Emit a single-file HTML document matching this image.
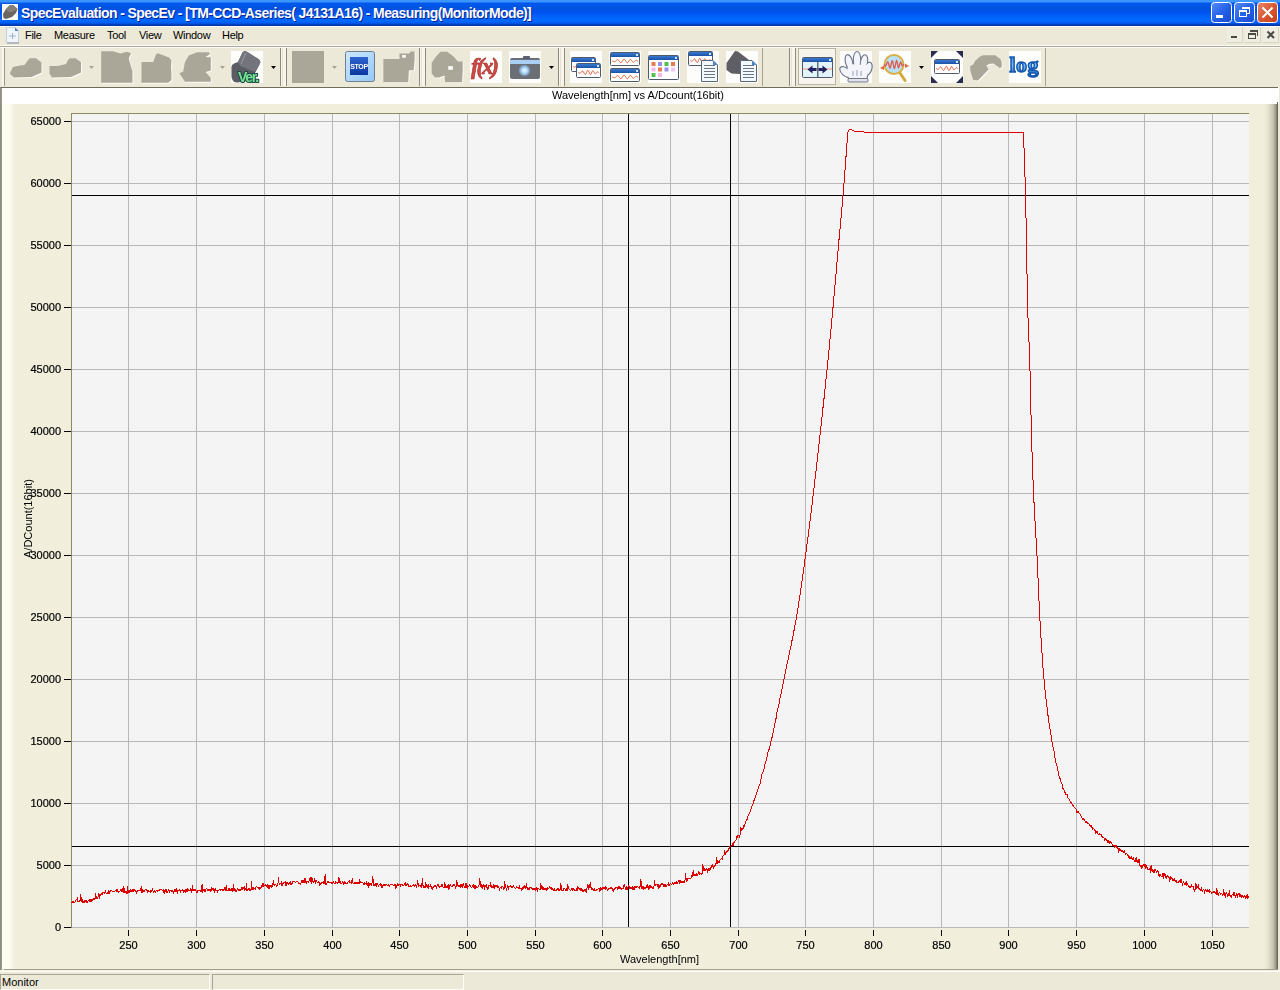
<!DOCTYPE html>
<html><head><meta charset="utf-8">
<style>
html,body{margin:0;padding:0;width:1280px;height:990px;overflow:hidden;background:#ece9d8;font-family:"Liberation Sans", sans-serif;}
.abs{position:absolute;}
#title{left:0;top:0;width:1280px;height:26px;background:linear-gradient(to bottom,#3d95ff 0px,#3d95ff 2px,#0058ee 3px,#0054dd 8px,#0050ee 12px,#0062f8 16px,#0068ff 21px,#005cf0 23px,#0048d0 24px,#0038a8 25px,#0038a8 26px);}
#ttext{left:21px;top:5px;color:#fff;font-weight:bold;font-size:14px;letter-spacing:-0.6px;white-space:nowrap;text-shadow:1px 1px 0 #0a1f8f;}
#menu{left:0;top:26px;width:1280px;height:20px;background:#ece9d8;border-top:1px solid #fbfbf8;box-sizing:border-box;}
.mi{position:absolute;top:2px;letter-spacing:-0.3px;font-size:11px;color:#000;}
#win{left:0;top:87px;width:1279px;height:883px;background:#fff;border-top:1px solid #77735f;border-left:1px solid #8c8a7c;border-right:1px solid #77735f;border-bottom:1px solid #8c8a7c;box-sizing:border-box;}
#status{left:0;top:970px;width:1280px;height:20px;background:#ece9d8;}
</style></head><body>
<div id="title" class="abs"></div>
<div id="ttext" class="abs">SpecEvaluation - SpecEv - [TM-CCD-Aseries( J4131A16) - Measuring(MonitorMode)]</div>
<div id="menu" class="abs">
<span class="mi" style="left:25px">File</span>
<span class="mi" style="left:54px">Measure</span>
<span class="mi" style="left:107px">Tool</span>
<span class="mi" style="left:139px">View</span>
<span class="mi" style="left:173px">Window</span>
<span class="mi" style="left:222px">Help</span>
</div>
<div class="abs" style="left:0;top:87px;width:1279px;height:17px;background:#fff;"></div>
<div class="abs" style="left:2px;top:104px;width:1275px;height:865px;background:linear-gradient(to right,#fefef4 0px,#fcfbee 8px,#f3f0df 12px,#f1eedc 14px,#f1eedc 1262px,#e6e3d0 1266px,#c8c5b2 1271px,#9a9886 1274px,#6e6c5e 1275px);"></div>
<div class="abs" style="left:0;top:87px;width:1278px;height:1px;background:#6f6c5c;"></div>
<div class="abs" style="left:0;top:87px;width:1px;height:883px;background:#8e8c7e;"></div>
<div class="abs" style="left:1px;top:88px;width:1px;height:882px;background:#9c9a8c;"></div>
<div class="abs" style="left:1277px;top:102px;width:1px;height:868px;background:#6a685a;"></div>
<div class="abs" style="left:4px;top:969px;width:1274px;height:1px;background:#a29f90;"></div>
<svg class="abs" style="left:0;top:0;will-change:transform" width="1280" height="990" font-family='"Liberation Sans", sans-serif' font-size="11" fill="#000">
<style>text.t{stroke:#000;stroke-width:0.2px;}</style>
<defs>
<radialGradient id="lens"><stop offset="0" stop-color="#f0faff"/><stop offset="0.5" stop-color="#a8d8ff"/><stop offset="1" stop-color="#6c7a90"/></radialGradient>
<linearGradient id="tbg" x1="0" y1="0" x2="0" y2="1"><stop offset="0" stop-color="#3a7ad0"/><stop offset="1" stop-color="#1a50a8"/></linearGradient>
<linearGradient id="stopbg" x1="0" y1="0" x2="1" y2="1"><stop offset="0" stop-color="#cfe8ff"/><stop offset="1" stop-color="#94c8f4"/></linearGradient>
<linearGradient id="stopin" x1="0" y1="0" x2="0" y2="1"><stop offset="0" stop-color="#2e64d0"/><stop offset="1" stop-color="#0a38a0"/></linearGradient>
<linearGradient id="logg" x1="0" y1="0" x2="0" y2="1"><stop offset="0" stop-color="#1a6ac8"/><stop offset="0.55" stop-color="#7cc4f4"/><stop offset="1" stop-color="#1458b0"/></linearGradient>
</defs>
<defs>
<linearGradient id="capb" x1="0" y1="0" x2="1" y2="1"><stop offset="0" stop-color="#5a8cf8"/><stop offset="0.5" stop-color="#2462e8"/><stop offset="1" stop-color="#1848d0"/></linearGradient>
<linearGradient id="capc" x1="0" y1="0" x2="1" y2="1"><stop offset="0" stop-color="#e8886a"/><stop offset="0.5" stop-color="#d85a34"/><stop offset="1" stop-color="#c04018"/></linearGradient>
</defs>
<rect x="1211.5" y="2.5" width="20" height="20" rx="3" fill="url(#capb)" stroke="#fff" stroke-width="1"/>
<rect x="1216" y="15" width="7" height="3" fill="#fff"/>
<rect x="1234.5" y="2.5" width="20" height="20" rx="3" fill="url(#capb)" stroke="#fff" stroke-width="1"/>
<rect x="1239.5" y="10.5" width="7" height="6" fill="none" stroke="#fff" stroke-width="1"/>
<rect x="1239" y="10" width="8" height="2" fill="#fff"/>
<path d="M1242.5,8 V7.5 H1249.5 V13.5 H1247" fill="none" stroke="#fff" stroke-width="1"/>
<rect x="1242" y="7" width="8" height="2" fill="#fff"/>
<rect x="1257.5" y="2.5" width="20" height="20" rx="3" fill="url(#capc)" stroke="#fff" stroke-width="1"/>
<path d="M1262.5,7.5 L1272.5,17.5 M1272.5,7.5 L1262.5,17.5" stroke="#fff" stroke-width="2"/>
<rect x="2" y="4" width="16" height="16" fill="#f8f8f6"/>
<polygon points="3,14 6,9 10,5 13,5 17.5,9 16,13 12,17 6,19 3.5,18" fill="#6a6760"/>
<polygon points="6,9 10,5 13,5 17.5,9 12,12 8,12" fill="#868078"/>
<path d="M6.5,27.5 H15 L18.5,31 V42.5 H6.5 Z" fill="#eef6fc" stroke="#c8d0dc" stroke-width="1"/>
<path d="M15,27.5 V31 H18.5 Z" fill="#4a80d0"/>
<rect x="7" y="42" width="12" height="2" fill="#b4b8bc"/>
<path d="M9,36 H16 M12.5,33 V39" stroke="#a0b0c0" stroke-width="1"/>
<rect x="1227" y="27" width="16" height="16" fill="#efede2"/>
<rect x="1227" y="42" width="16" height="1" fill="#d8d5c6"/>
<rect x="1242" y="27" width="1" height="16" fill="#d8d5c6"/>
<rect x="1245" y="27" width="16" height="16" fill="#efede2"/>
<rect x="1245" y="42" width="16" height="1" fill="#d8d5c6"/>
<rect x="1260" y="27" width="1" height="16" fill="#d8d5c6"/>
<rect x="1263" y="27" width="16" height="16" fill="#efede2"/>
<rect x="1263" y="42" width="16" height="1" fill="#d8d5c6"/>
<rect x="1278" y="27" width="1" height="16" fill="#d8d5c6"/>
<rect x="1231" y="36" width="6" height="2" fill="#4a4a44"/>
<rect x="1248.5" y="33.5" width="7" height="5" fill="none" stroke="#4a4a44" stroke-width="1"/>
<rect x="1248" y="33" width="8" height="2" fill="#4a4a44"/>
<path d="M1250.5,31.5 H1257.5 V36" fill="none" stroke="#4a4a44" stroke-width="1"/>
<rect x="1250" y="30" width="8" height="2" fill="#4a4a44"/>
<path d="M1267.5,31.5 L1274,38 M1274,31.5 L1267.5,38" stroke="#4a4a44" stroke-width="2"/>
<rect x="0" y="45" width="1280" height="1" fill="#fbfaf4"/>
<rect x="0" y="46" width="1280" height="1" fill="#aeab9c"/>
<rect x="0" y="47" width="1280" height="1" fill="#fbfaf5"/>
<rect x="2" y="48" width="2" height="38" fill="#f8f7ef"/>
<rect x="4" y="48" width="1" height="38" fill="#9a978a"/>
<polygon points="11,74 14,68 21,66.5 25.5,66 28.5,62 30.5,59.3 37,59.3 42.5,63.4 42.5,73.5 32.5,78 15,78.4 11.3,75.3" fill="#fbfaf4"/><polygon points="10,73 13,67 20,65.5 24.5,65 27.5,61 29.5,58.3 36,58.3 41.5,62.4 41.5,72.5 31.5,77 14,77.4 10.3,74.3" fill="#aaa799" />
<polygon points="50.5,67 58,67 61,66.5 67,65 69,61 71,59.3 76.5,59.3 82,63.2 82,73.5 72,78 53,78.4 50.5,74.5" fill="#fbfaf4"/><polygon points="49.5,66 57,66 60,65.5 66,64 68,60 70,58.3 75.5,58.3 81,62.2 81,72.5 71,77 52,77.4 49.5,73.5" fill="#aaa799" />
<polygon points="89,66 94,66 91.5,69" fill="#a8a598"/>
<polygon points="102.2,52.3 113.9,52.3 121.4,54.6 127.9,52.75 132.1,54.2 129.8,59.3 130.3,62.1 133.5,72.4 133.5,83.7 102.2,83.7" fill="#fbfaf4"/><polygon points="101.2,51.3 112.9,51.3 120.4,53.6 126.9,51.75 131.1,53.2 128.8,58.3 129.3,61.1 132.5,71.4 132.5,82.7 101.2,82.7" fill="#aaa799" />
<polygon points="142.5,63 154.2,63 157,55.6 158.9,54.2 170.1,58.4 172.4,61.2 172,68.7 172.4,73.4 172.4,80.9 169.2,83.7 142.5,83.7" fill="#fbfaf4"/><polygon points="141.5,62 153.2,62 156,54.6 157.9,53.2 169.1,57.4 171.4,60.2 171,67.7 171.4,72.4 171.4,79.9 168.2,82.7 141.5,82.7" fill="#aaa799" />
<polygon points="186,63 189.8,56.5 198.2,53.2 209.5,53.2 211,55 206.6,57.9 211.8,58.4 211.8,71.5 206.6,72.9 211.8,79 211.8,82.7 186,82.7 180.4,74.3 184.2,72.4" fill="#fbfaf4"/><polygon points="185,62 188.8,55.5 197.2,52.2 208.5,52.2 210,54 205.6,56.9 210.8,57.4 210.8,70.5 205.6,71.9 210.8,78 210.8,81.7 185,81.7 179.4,73.3 183.2,71.4" fill="#aaa799" />
<polygon points="220,66 225,66 222.5,69" fill="#a8a598"/>
<rect x="231" y="51" width="32" height="32" fill="#fdfdfb"/>
<path d="M231.5,68 Q231,65 234,63.5 L238,62 L242.5,52.5 Q244,50.5 246.5,51.5 L258.5,59 Q261,61 260,63.5 L253,77 Q252,79 249,80 L238,82.5 Q234,83 232.5,80 L231.5,77 Z" fill="#5c5c64"/>
<path d="M238,62 L242.5,52.5 Q244,50.5 246.5,51.5 L258.5,59 Q261,61 260,63.5 L255,72 L240,66 Z" fill="#74747c"/>
<path d="M246,53 L241,64" stroke="#9a9aa4" stroke-width="1"/>
<text x="238" y="82" font-family="Liberation Sans, sans-serif" font-weight="bold" font-size="14" fill="#1c4a44" stroke="#1c4a44" stroke-width="2.2" stroke-linejoin="round" letter-spacing="-1.3">Ver.</text>
<text x="238" y="82" font-family="Liberation Sans, sans-serif" font-weight="bold" font-size="14" fill="#78e294" letter-spacing="-1.3">Ver.</text>
<polygon points="271,66 276,66 273.5,69" fill="#000"/>
<rect x="280" y="48" width="1" height="38" fill="#8e8b7c"/><rect x="281" y="48" width="5" height="38" fill="#f7f5ec"/><rect x="282" y="48" width="1" height="38" fill="#e4e1d2"/><rect x="286" y="48" width="1" height="38" fill="#8e8b7c"/>
<rect x="292" y="51" width="32" height="32" fill="#aaa799"/>
<polygon points="332,66 337,66 334.5,69" fill="#a8a598"/>
<rect x="345.5" y="51.5" width="29" height="30" rx="2" fill="url(#stopbg)" stroke="#6f7f90" stroke-width="1"/>
<rect x="350" y="57" width="18" height="18" fill="url(#stopin)"/>
<text x="359" y="69" text-anchor="middle" font-family="Liberation Sans, sans-serif" font-weight="bold" font-size="7" fill="#fff" letter-spacing="-0.4">STOP</text>
<polygon points="384.4,60.1 400.5,60.1 400.5,54.4 410.6,54.4 411.2,52.4 415.6,52.4 415.6,61 414.6,71.2 409.9,71.2 409.2,83.3 384.4,83.3" fill="#fbfaf4"/><polygon points="383.4,59.1 399.5,59.1 399.5,53.4 409.6,53.4 410.2,51.4 414.6,51.4 414.6,60 413.6,70.2 408.9,70.2 408.2,82.3 383.4,82.3" fill="#aaa799" />
<rect x="402.2" y="55" width="3.7" height="2.7" fill="#fbfaf4"/>
<rect x="419" y="48" width="1" height="38" fill="#8e8b7c"/><rect x="420" y="48" width="5" height="38" fill="#f7f5ec"/><rect x="421" y="48" width="1" height="38" fill="#e4e1d2"/><rect x="425" y="48" width="1" height="38" fill="#8e8b7c"/>
<polygon points="432.7,63.8 436.8,57.7 441.5,52.7 448.2,52.7 454.9,57.7 459,62.4 463.7,62.4 463.7,71 463,83.3 446.2,83.3 445.5,76.6 440.1,78.6 436.1,78.6 432.7,74.5" fill="#fbfaf4"/><polygon points="431.7,62.8 435.8,56.7 440.5,51.7 447.2,51.7 453.9,56.7 458,61.4 462.7,61.4 462.7,70 462,82.3 445.2,82.3 444.5,75.6 439.1,77.6 435.1,77.6 431.7,73.5" fill="#aaa799" />
<rect x="448.2" y="66.1" width="4.7" height="3.7" fill="#fbfaf4"/>
<rect x="470" y="51" width="32" height="32" fill="#fdfdfb"/>
<text x="471" y="74" font-family="Liberation Serif, serif" font-style="italic" font-weight="bold" font-size="23" fill="#cc4a44" stroke="#a83030" stroke-width="0.6" letter-spacing="-2.2">f(x)</text>
<rect x="509" y="51" width="32" height="32" fill="#fdfdfb"/>
<rect x="510" y="58" width="30" height="21" rx="2" fill="#6c6e76"/>
<rect x="510" y="60" width="30" height="4" fill="#a9d0f4"/>
<rect x="523" y="56" width="7" height="3" rx="1" fill="#5a6070"/>
<circle cx="524.5" cy="70.5" r="6" fill="url(#lens)"/>
<polygon points="549,66 554,66 551.5,69" fill="#000"/>
<rect x="558" y="48" width="1" height="38" fill="#8e8b7c"/><rect x="559" y="48" width="5" height="38" fill="#f7f5ec"/><rect x="560" y="48" width="1" height="38" fill="#e4e1d2"/><rect x="564" y="48" width="1" height="38" fill="#8e8b7c"/>
<rect x="570" y="51" width="32" height="32" fill="#fdfdfb"/>
<rect x="571.5" y="57.5" width="24" height="14" rx="1" fill="#ffffff" stroke="#4c5a6c" stroke-width="1"/>
<rect x="572" y="58" width="23" height="4" fill="url(#tbg)"/>
<rect x="592" y="59" width="2" height="2" fill="#cfe6ff"/>
<polyline points="573.00,66.50 573.50,66.68 574.00,67.00 574.50,67.26 575.00,67.29 575.50,67.00 576.00,66.42 576.50,65.72 577.00,65.15 577.50,64.95 578.00,65.23 578.50,65.98 579.00,66.99 579.50,67.92 580.00,68.45 580.50,68.36 581.00,67.62 581.50,66.46 582.00,65.28 582.50,64.48 583.00,64.37 583.50,65.02 584.00,66.19 584.50,67.47 585.00,68.39 585.50,68.60 586.00,68.04 586.50,66.92 587.00,65.70 587.50,64.84 588.00,64.67 588.50,65.21 589.00,66.20 589.50,67.21 590.00,67.81 590.50,67.82 591.00,67.30 591.50,66.56 592.00,65.97 592.50,65.77 593.00,65.96 593.50,66.32 594.00,66.50" fill="none" stroke="#e0603a" stroke-width="1.0"/>
<rect x="576.5" y="63.5" width="24" height="14" rx="1" fill="#ffffff" stroke="#4c5a6c" stroke-width="1"/>
<rect x="577" y="64" width="23" height="4" fill="url(#tbg)"/>
<rect x="597" y="65" width="2" height="2" fill="#cfe6ff"/>
<polyline points="578.00,72.50 578.50,72.68 579.00,73.00 579.50,73.26 580.00,73.29 580.50,73.00 581.00,72.42 581.50,71.72 582.00,71.15 582.50,70.95 583.00,71.23 583.50,71.98 584.00,72.99 584.50,73.92 585.00,74.45 585.50,74.36 586.00,73.62 586.50,72.46 587.00,71.28 587.50,70.48 588.00,70.37 588.50,71.02 589.00,72.19 589.50,73.47 590.00,74.39 590.50,74.60 591.00,74.04 591.50,72.92 592.00,71.70 592.50,70.84 593.00,70.67 593.50,71.21 594.00,72.20 594.50,73.21 595.00,73.81 595.50,73.82 596.00,73.30 596.50,72.56 597.00,71.97 597.50,71.77 598.00,71.96 598.50,72.32 599.00,72.50" fill="none" stroke="#e0603a" stroke-width="1.0"/>
<rect x="609" y="51" width="32" height="32" fill="#fdfdfb"/>
<rect x="610.5" y="52.5" width="29" height="13" rx="1" fill="#ffffff" stroke="#4c5a6c" stroke-width="1"/>
<rect x="611" y="53" width="28" height="4" fill="url(#tbg)"/>
<rect x="636" y="54" width="2" height="2" fill="#cfe6ff"/>
<polyline points="612.00,61.00 612.50,61.11 613.00,61.32 613.50,61.54 614.00,61.68 614.50,61.67 615.00,61.48 615.50,61.12 616.00,60.66 616.50,60.18 617.00,59.82 617.50,59.67 618.00,59.79 618.50,60.19 619.00,60.81 619.50,61.52 620.00,62.17 620.50,62.60 621.00,62.70 621.50,62.43 622.00,61.82 622.50,61.01 623.00,60.17 623.50,59.50 624.00,59.15 624.50,59.23 625.00,59.73 625.50,60.52 626.00,61.43 626.50,62.23 627.00,62.72 627.50,62.80 628.00,62.43 628.50,61.72 629.00,60.86 629.50,60.07 630.00,59.54 630.50,59.42 631.00,59.70 631.50,60.29 632.00,61.03 632.50,61.69 633.00,62.10 633.50,62.18 634.00,61.94 634.50,61.47 635.00,60.96 635.50,60.56 636.00,60.38 636.50,60.44 637.00,60.66 637.50,60.90 638.00,61.00" fill="none" stroke="#e0603a" stroke-width="1.0"/>
<rect x="610.5" y="68.5" width="29" height="13" rx="1" fill="#ffffff" stroke="#4c5a6c" stroke-width="1"/>
<rect x="611" y="69" width="28" height="4" fill="url(#tbg)"/>
<rect x="636" y="70" width="2" height="2" fill="#cfe6ff"/>
<polyline points="612.00,77.00 612.50,77.11 613.00,77.32 613.50,77.54 614.00,77.68 614.50,77.67 615.00,77.48 615.50,77.12 616.00,76.66 616.50,76.18 617.00,75.82 617.50,75.67 618.00,75.79 618.50,76.19 619.00,76.81 619.50,77.52 620.00,78.17 620.50,78.60 621.00,78.70 621.50,78.43 622.00,77.82 622.50,77.01 623.00,76.17 623.50,75.50 624.00,75.15 624.50,75.23 625.00,75.73 625.50,76.52 626.00,77.43 626.50,78.23 627.00,78.72 627.50,78.80 628.00,78.43 628.50,77.72 629.00,76.86 629.50,76.07 630.00,75.54 630.50,75.42 631.00,75.70 631.50,76.29 632.00,77.03 632.50,77.69 633.00,78.10 633.50,78.18 634.00,77.94 634.50,77.47 635.00,76.96 635.50,76.56 636.00,76.38 636.50,76.44 637.00,76.66 637.50,76.90 638.00,77.00" fill="none" stroke="#e0603a" stroke-width="1.0"/>
<rect x="648" y="51" width="32" height="32" fill="#fdfdfb"/>
<rect x="648.5" y="55.5" width="30" height="24" rx="1" fill="#ffffff" stroke="#4c5a6c" stroke-width="1"/>
<rect x="649" y="56" width="29" height="4" fill="url(#tbg)"/>
<rect x="675" y="57" width="2" height="2" fill="#cfe6ff"/>
<rect x="651.5" y="62.0" width="4" height="4" fill="#e87a50"/>
<rect x="658.0" y="62.0" width="4" height="4" fill="#9a90ee"/>
<rect x="664.5" y="62.0" width="4" height="4" fill="#50c050"/>
<rect x="671.0" y="62.0" width="4" height="4" fill="#e87a50"/>
<rect x="651.5" y="67.5" width="4" height="4" fill="#f4b8ea"/>
<rect x="658.0" y="67.5" width="4" height="4" fill="#e87a50"/>
<rect x="664.5" y="67.5" width="4" height="4" fill="#9a90ee"/>
<rect x="671.0" y="67.5" width="4" height="4" fill="#f0c8f0"/>
<rect x="651.5" y="73.0" width="4" height="4" fill="#50c050"/>
<rect x="658.0" y="73.0" width="4" height="4" fill="#f4b8ea"/>
<rect x="687" y="51" width="32" height="32" fill="#fdfdfb"/>
<rect x="688.5" y="51.5" width="24" height="14" rx="1" fill="#ffffff" stroke="#4c5a6c" stroke-width="1"/>
<rect x="689" y="52" width="23" height="4" fill="url(#tbg)"/>
<rect x="709" y="53" width="2" height="2" fill="#cfe6ff"/>
<polyline points="690.00,60.50 690.50,60.68 691.00,61.00 691.50,61.26 692.00,61.29 692.50,61.00 693.00,60.42 693.50,59.72 694.00,59.15 694.50,58.95 695.00,59.23 695.50,59.98 696.00,60.99 696.50,61.92 697.00,62.45 697.50,62.36 698.00,61.62 698.50,60.46 699.00,59.28 699.50,58.48 700.00,58.37 700.50,59.02 701.00,60.19 701.50,61.47 702.00,62.39 702.50,62.60 703.00,62.04 703.50,60.92 704.00,59.70 704.50,58.84 705.00,58.67 705.50,59.21 706.00,60.20 706.50,61.21 707.00,61.81 707.50,61.82 708.00,61.30 708.50,60.56 709.00,59.97 709.50,59.77 710.00,59.96 710.50,60.32 711.00,60.50" fill="none" stroke="#e0603a" stroke-width="1.0"/>
<path d="M701.5,60.5 H713 L717.5,65 V81.5 H701.5 Z" fill="#f4f9ff" stroke="#56667a" stroke-width="1"/>
<path d="M713,60.5 V65 H717.5 Z" fill="#4a86d0"/>
<rect x="704" y="65" width="11" height="1" fill="#6a7482"/>
<rect x="704" y="68" width="11" height="1" fill="#6a7482"/>
<rect x="704" y="71" width="11" height="1" fill="#6a7482"/>
<rect x="704" y="74" width="11" height="1" fill="#6a7482"/>
<rect x="704" y="77" width="11" height="1" fill="#6a7482"/>
<rect x="726" y="51" width="32" height="32" fill="#fdfdfb"/>
<polygon points="726.5,63 735,51 738,51.5 749,60 744,66 740,74 731.4,73.6 726.5,70" fill="#5e5e64" />
<path d="M740.5,60.5 H752 L756.5,65 V81.5 H740.5 Z" fill="#f4f9ff" stroke="#56667a" stroke-width="1"/>
<path d="M752,60.5 V65 H756.5 Z" fill="#4a86d0"/>
<rect x="743" y="65" width="11" height="1" fill="#6a7482"/>
<rect x="743" y="68" width="11" height="1" fill="#6a7482"/>
<rect x="743" y="71" width="11" height="1" fill="#6a7482"/>
<rect x="743" y="74" width="11" height="1" fill="#6a7482"/>
<rect x="743" y="77" width="11" height="1" fill="#6a7482"/>
<rect x="762" y="48" width="1" height="38" fill="#a5a292"/>
<rect x="789" y="48" width="1" height="38" fill="#8e8b7c"/><rect x="790" y="48" width="5" height="38" fill="#f7f5ec"/><rect x="791" y="48" width="1" height="38" fill="#e4e1d2"/><rect x="795" y="48" width="1" height="38" fill="#8e8b7c"/>
<rect x="798.5" y="48.5" width="37" height="36" fill="#f6f4ec" stroke="#b8b5a6" stroke-width="1"/>
<rect x="802.5" y="57.5" width="30" height="20" rx="1" fill="#e2f4fa" stroke="#4c5a6c" stroke-width="1"/>
<rect x="803" y="58" width="29" height="4" fill="url(#tbg)"/>
<rect x="829" y="59" width="2" height="2" fill="#cfe6ff"/>
<rect x="803" y="68.5" width="29" height="1" fill="#f09070"/>
<rect x="817" y="62" width="1.5" height="15" fill="#607080"/>
<polygon points="807.5,69.5 812.5,65.5 812.5,68 816.5,68 816.5,71 812.5,71 812.5,73.5" fill="#22225e"/>
<polygon points="827.5,69.5 822.5,65.5 822.5,68 818.5,68 818.5,71 822.5,71 822.5,73.5" fill="#22225e"/>
<rect x="840" y="51" width="32" height="32" fill="#fdfdfb"/>
<g fill="#6a7284" stroke="#6a7284" stroke-width="2.2"><ellipse cx="849" cy="62" rx="3" ry="7" transform="rotate(-14 849 62)"/><ellipse cx="857" cy="60" rx="3.2" ry="8"/><ellipse cx="864" cy="62" rx="3" ry="6.8" transform="rotate(10 864 62)"/><ellipse cx="868.3" cy="68.5" rx="3" ry="6" transform="rotate(16 868.3 68.5)"/><ellipse cx="845.5" cy="72" rx="6.3" ry="3.2" transform="rotate(42 845.5 72)"/><path d="M848,64 L868,65 L868,72 L866,80 L850,80 L847,74 Z"/></g>
<g fill="#f4f4fb"><ellipse cx="849" cy="62" rx="3" ry="7" transform="rotate(-14 849 62)"/><ellipse cx="857" cy="60" rx="3.2" ry="8"/><ellipse cx="864" cy="62" rx="3" ry="6.8" transform="rotate(10 864 62)"/><ellipse cx="868.3" cy="68.5" rx="3" ry="6" transform="rotate(16 868.3 68.5)"/><ellipse cx="845.5" cy="72" rx="6.3" ry="3.2" transform="rotate(42 845.5 72)"/><path d="M848,64 L868,65 L868,72 L866,80 L850,80 L847,74 Z"/></g>
<path d="M853,71 V76 M857,70 V76 M861,71 V76" stroke="#9aa0b8" stroke-width="1"/>
<rect x="848" y="78.5" width="20" height="3.5" rx="1" fill="#e2e2e8" stroke="#6f7686" stroke-width="1"/>
<rect x="879" y="51" width="32" height="32" fill="#fdfdfb"/>
<line x1="900" y1="73" x2="905" y2="80.5" stroke="#d4aa3a" stroke-width="3" stroke-linecap="round"/>
<circle cx="894" cy="64.5" r="9.5" fill="#b8e0fa" stroke="#d8b048" stroke-width="2"/>
<polyline points="884.00,64.50 884.50,64.90 885.00,65.54 885.50,65.86 886.00,65.48 886.50,64.38 887.00,62.99 887.50,62.01 888.00,62.04 888.50,63.25 889.00,65.23 889.50,67.11 890.00,67.95 890.50,67.21 891.00,65.11 891.50,62.59 892.00,60.86 892.50,60.84 893.00,62.62 893.50,65.38 894.00,67.74 894.50,68.47 895.00,67.19 895.50,64.54 896.00,61.93 896.50,60.73 897.00,61.56 897.50,63.90 898.00,66.42 898.50,67.72 899.00,67.18 899.50,65.23 900.00,63.11 900.50,62.05 901.00,62.51 901.50,63.98 902.00,65.40 902.50,65.91 903.00,65.42 903.50,64.62 904.00,64.50" fill="none" stroke="#e05a48" stroke-width="1.3"/>
<polygon points="880,68 884,65.5 884,70" fill="#e06a40"/>
<polygon points="909,66 905,63.5 905,68" fill="#e06a40"/>
<polygon points="919,66 924,66 921.5,69" fill="#000"/>
<rect x="931" y="51" width="32" height="32" fill="#fdfdfb"/>
<polygon points="931,51 938,51 931,58" fill="#2a2c50"/>
<polygon points="963,51 956,51 963,58" fill="#2a2c50"/>
<polygon points="931,83 938,83 931,76" fill="#2a2c50"/>
<polygon points="963,83 956,83 963,76" fill="#2a2c50"/>
<rect x="934.5" y="59.5" width="25" height="14" rx="1" fill="#ffffff" stroke="#4c5a6c" stroke-width="1"/>
<rect x="935" y="60" width="24" height="4" fill="url(#tbg)"/>
<rect x="956" y="61" width="2" height="2" fill="#cfe6ff"/>
<polyline points="936.00,68.50 936.50,68.67 937.00,68.97 937.50,69.24 938.00,69.31 938.50,69.09 939.00,68.60 939.50,67.94 940.00,67.33 940.50,66.98 941.00,67.04 941.50,67.56 942.00,68.43 942.50,69.40 943.00,70.18 943.50,70.50 944.00,70.21 944.50,69.38 945.00,68.24 945.50,67.14 946.00,66.44 946.50,66.39 947.00,67.02 947.50,68.13 948.00,69.37 948.50,70.30 949.00,70.62 949.50,70.23 950.00,69.26 950.50,68.07 951.00,67.08 951.50,66.65 952.00,66.89 952.50,67.68 953.00,68.68 953.50,69.52 954.00,69.89 954.50,69.70 955.00,69.11 955.50,68.40 956.00,67.90 956.50,67.78 957.00,67.99 957.50,68.34 958.00,68.50" fill="none" stroke="#e0603a" stroke-width="1.0"/>
<polygon points="971.1,67.2 971.5,72.3 974.2,80.9 979,81.6 989.7,70.2 987.3,66.5 991,64.7 994.5,64.4 1000.7,68.9 1002.7,68.2 1002.7,62.7 1001.4,59.9 996.2,56.2 983.8,56.2 980.4,57.9 976.3,61.65 974.2,65.4" fill="#fbfaf4"/><polygon points="970.1,66.2 970.5,71.3 973.2,79.9 978,80.6 988.7,69.2 986.3,65.5 990,63.7 993.5,63.4 999.7,67.9 1001.7,67.2 1001.7,61.7 1000.4,58.9 995.2,55.2 982.8,55.2 979.4,56.9 975.3,60.65 973.2,64.4" fill="#aaa799" />
<rect x="1009" y="51" width="32" height="32" fill="#fdfdfb"/>
<text x="1009.5" y="71.5" font-family="Liberation Serif, serif" font-weight="bold" font-size="22" fill="url(#logg)" stroke="#1458b0" stroke-width="1.5" letter-spacing="0.4">log</text>
<rect x="1045" y="48" width="1" height="38" fill="#a5a292"/>
<text x="638" y="99" text-anchor="middle">Wavelength[nm] vs A/Dcount(16bit)</text>
<text x="659.5" y="963" text-anchor="middle">Wavelength[nm]</text>
<text transform="translate(32,558) rotate(-90)" text-anchor="start">A/DCount(16bit)</text>
<rect x="71" y="113" width="1178" height="814" fill="#f4f4f4"/>
<line x1="128.5" y1="113" x2="128.5" y2="927" stroke="#b8b8b8" stroke-width="1"/>
<line x1="128.5" y1="930" x2="128.5" y2="936" stroke="#000" stroke-width="1"/>
<text class="t" x="128.5" y="949" text-anchor="middle">250</text>
<line x1="196.5" y1="113" x2="196.5" y2="927" stroke="#b8b8b8" stroke-width="1"/>
<line x1="196.5" y1="930" x2="196.5" y2="936" stroke="#000" stroke-width="1"/>
<text class="t" x="196.5" y="949" text-anchor="middle">300</text>
<line x1="264.5" y1="113" x2="264.5" y2="927" stroke="#b8b8b8" stroke-width="1"/>
<line x1="264.5" y1="930" x2="264.5" y2="936" stroke="#000" stroke-width="1"/>
<text class="t" x="264.5" y="949" text-anchor="middle">350</text>
<line x1="332.5" y1="113" x2="332.5" y2="927" stroke="#b8b8b8" stroke-width="1"/>
<line x1="332.5" y1="930" x2="332.5" y2="936" stroke="#000" stroke-width="1"/>
<text class="t" x="332.5" y="949" text-anchor="middle">400</text>
<line x1="399.5" y1="113" x2="399.5" y2="927" stroke="#b8b8b8" stroke-width="1"/>
<line x1="399.5" y1="930" x2="399.5" y2="936" stroke="#000" stroke-width="1"/>
<text class="t" x="399.5" y="949" text-anchor="middle">450</text>
<line x1="467.5" y1="113" x2="467.5" y2="927" stroke="#b8b8b8" stroke-width="1"/>
<line x1="467.5" y1="930" x2="467.5" y2="936" stroke="#000" stroke-width="1"/>
<text class="t" x="467.5" y="949" text-anchor="middle">500</text>
<line x1="535.5" y1="113" x2="535.5" y2="927" stroke="#b8b8b8" stroke-width="1"/>
<line x1="535.5" y1="930" x2="535.5" y2="936" stroke="#000" stroke-width="1"/>
<text class="t" x="535.5" y="949" text-anchor="middle">550</text>
<line x1="602.5" y1="113" x2="602.5" y2="927" stroke="#b8b8b8" stroke-width="1"/>
<line x1="602.5" y1="930" x2="602.5" y2="936" stroke="#000" stroke-width="1"/>
<text class="t" x="602.5" y="949" text-anchor="middle">600</text>
<line x1="670.5" y1="113" x2="670.5" y2="927" stroke="#b8b8b8" stroke-width="1"/>
<line x1="670.5" y1="930" x2="670.5" y2="936" stroke="#000" stroke-width="1"/>
<text class="t" x="670.5" y="949" text-anchor="middle">650</text>
<line x1="738.5" y1="113" x2="738.5" y2="927" stroke="#b8b8b8" stroke-width="1"/>
<line x1="738.5" y1="930" x2="738.5" y2="936" stroke="#000" stroke-width="1"/>
<text class="t" x="738.5" y="949" text-anchor="middle">700</text>
<line x1="805.5" y1="113" x2="805.5" y2="927" stroke="#b8b8b8" stroke-width="1"/>
<line x1="805.5" y1="930" x2="805.5" y2="936" stroke="#000" stroke-width="1"/>
<text class="t" x="805.5" y="949" text-anchor="middle">750</text>
<line x1="873.5" y1="113" x2="873.5" y2="927" stroke="#b8b8b8" stroke-width="1"/>
<line x1="873.5" y1="930" x2="873.5" y2="936" stroke="#000" stroke-width="1"/>
<text class="t" x="873.5" y="949" text-anchor="middle">800</text>
<line x1="941.5" y1="113" x2="941.5" y2="927" stroke="#b8b8b8" stroke-width="1"/>
<line x1="941.5" y1="930" x2="941.5" y2="936" stroke="#000" stroke-width="1"/>
<text class="t" x="941.5" y="949" text-anchor="middle">850</text>
<line x1="1008.5" y1="113" x2="1008.5" y2="927" stroke="#b8b8b8" stroke-width="1"/>
<line x1="1008.5" y1="930" x2="1008.5" y2="936" stroke="#000" stroke-width="1"/>
<text class="t" x="1008.5" y="949" text-anchor="middle">900</text>
<line x1="1076.5" y1="113" x2="1076.5" y2="927" stroke="#b8b8b8" stroke-width="1"/>
<line x1="1076.5" y1="930" x2="1076.5" y2="936" stroke="#000" stroke-width="1"/>
<text class="t" x="1076.5" y="949" text-anchor="middle">950</text>
<line x1="1144.5" y1="113" x2="1144.5" y2="927" stroke="#b8b8b8" stroke-width="1"/>
<line x1="1144.5" y1="930" x2="1144.5" y2="936" stroke="#000" stroke-width="1"/>
<text class="t" x="1144.5" y="949" text-anchor="middle">1000</text>
<line x1="1212.5" y1="113" x2="1212.5" y2="927" stroke="#b8b8b8" stroke-width="1"/>
<line x1="1212.5" y1="930" x2="1212.5" y2="936" stroke="#000" stroke-width="1"/>
<text class="t" x="1212.5" y="949" text-anchor="middle">1050</text>
<line x1="71" y1="927.5" x2="1249" y2="927.5" stroke="#b8b8b8" stroke-width="1"/>
<line x1="64" y1="927.5" x2="71" y2="927.5" stroke="#000" stroke-width="1"/>
<text class="t" x="61" y="931" text-anchor="end">0</text>
<line x1="71" y1="865.5" x2="1249" y2="865.5" stroke="#b8b8b8" stroke-width="1"/>
<line x1="64" y1="865.5" x2="71" y2="865.5" stroke="#000" stroke-width="1"/>
<text class="t" x="61" y="869" text-anchor="end">5000</text>
<line x1="71" y1="803.5" x2="1249" y2="803.5" stroke="#b8b8b8" stroke-width="1"/>
<line x1="64" y1="803.5" x2="71" y2="803.5" stroke="#000" stroke-width="1"/>
<text class="t" x="61" y="807" text-anchor="end">10000</text>
<line x1="71" y1="741.5" x2="1249" y2="741.5" stroke="#b8b8b8" stroke-width="1"/>
<line x1="64" y1="741.5" x2="71" y2="741.5" stroke="#000" stroke-width="1"/>
<text class="t" x="61" y="745" text-anchor="end">15000</text>
<line x1="71" y1="679.5" x2="1249" y2="679.5" stroke="#b8b8b8" stroke-width="1"/>
<line x1="64" y1="679.5" x2="71" y2="679.5" stroke="#000" stroke-width="1"/>
<text class="t" x="61" y="683" text-anchor="end">20000</text>
<line x1="71" y1="617.5" x2="1249" y2="617.5" stroke="#b8b8b8" stroke-width="1"/>
<line x1="64" y1="617.5" x2="71" y2="617.5" stroke="#000" stroke-width="1"/>
<text class="t" x="61" y="621" text-anchor="end">25000</text>
<line x1="71" y1="555.5" x2="1249" y2="555.5" stroke="#b8b8b8" stroke-width="1"/>
<line x1="64" y1="555.5" x2="71" y2="555.5" stroke="#000" stroke-width="1"/>
<text class="t" x="61" y="559" text-anchor="end">30000</text>
<line x1="71" y1="493.5" x2="1249" y2="493.5" stroke="#b8b8b8" stroke-width="1"/>
<line x1="64" y1="493.5" x2="71" y2="493.5" stroke="#000" stroke-width="1"/>
<text class="t" x="61" y="497" text-anchor="end">35000</text>
<line x1="71" y1="431.5" x2="1249" y2="431.5" stroke="#b8b8b8" stroke-width="1"/>
<line x1="64" y1="431.5" x2="71" y2="431.5" stroke="#000" stroke-width="1"/>
<text class="t" x="61" y="435" text-anchor="end">40000</text>
<line x1="71" y1="369.5" x2="1249" y2="369.5" stroke="#b8b8b8" stroke-width="1"/>
<line x1="64" y1="369.5" x2="71" y2="369.5" stroke="#000" stroke-width="1"/>
<text class="t" x="61" y="373" text-anchor="end">45000</text>
<line x1="71" y1="307.5" x2="1249" y2="307.5" stroke="#b8b8b8" stroke-width="1"/>
<line x1="64" y1="307.5" x2="71" y2="307.5" stroke="#000" stroke-width="1"/>
<text class="t" x="61" y="311" text-anchor="end">50000</text>
<line x1="71" y1="245.5" x2="1249" y2="245.5" stroke="#b8b8b8" stroke-width="1"/>
<line x1="64" y1="245.5" x2="71" y2="245.5" stroke="#000" stroke-width="1"/>
<text class="t" x="61" y="249" text-anchor="end">55000</text>
<line x1="71" y1="183.5" x2="1249" y2="183.5" stroke="#b8b8b8" stroke-width="1"/>
<line x1="64" y1="183.5" x2="71" y2="183.5" stroke="#000" stroke-width="1"/>
<text class="t" x="61" y="187" text-anchor="end">60000</text>
<line x1="71" y1="121.5" x2="1249" y2="121.5" stroke="#b8b8b8" stroke-width="1"/>
<line x1="64" y1="121.5" x2="71" y2="121.5" stroke="#000" stroke-width="1"/>
<text class="t" x="61" y="125" text-anchor="end">65000</text>
<line x1="71" y1="113.5" x2="1249" y2="113.5" stroke="#8f8a64" stroke-width="1"/>
<line x1="71.5" y1="113" x2="71.5" y2="928" stroke="#8f8a64" stroke-width="1"/>
<line x1="628.5" y1="114" x2="628.5" y2="927" stroke="#000" stroke-width="1"/>
<line x1="730.5" y1="114" x2="730.5" y2="927" stroke="#000" stroke-width="1"/>
<line x1="72" y1="195.5" x2="1249" y2="195.5" stroke="#000" stroke-width="1"/>
<line x1="72" y1="846.5" x2="1249" y2="846.5" stroke="#000" stroke-width="1"/>
<polyline points="71.00,902.50 71.58,902.10 72.15,901.82 72.73,902.41 73.30,901.66 73.88,902.83 74.45,902.30 75.03,902.07 75.60,900.37 76.18,899.62 76.75,899.63 77.33,897.63 77.90,901.58 78.48,901.09 79.05,901.84 79.63,901.04 80.20,900.57 80.78,894.28 81.35,900.74 81.93,901.55 82.50,899.83 83.08,903.01 83.65,902.33 84.23,900.41 84.80,902.11 85.38,901.19 85.95,900.80 86.53,900.90 87.10,902.71 87.68,901.10 88.25,900.93 88.83,899.96 89.40,901.72 89.98,898.85 90.55,901.20 91.13,899.68 91.70,901.68 92.28,899.53 92.85,899.43 93.43,899.00 94.00,899.74 94.58,898.77 95.15,898.63 95.73,893.24 96.30,898.61 96.88,898.64 97.45,897.61 98.03,896.92 98.60,893.56 99.18,894.58 99.75,898.11 100.33,894.13 100.90,895.16 101.48,893.94 102.05,894.54 102.63,893.54 103.20,892.12 103.78,892.19 104.35,893.33 104.93,892.20 105.50,890.29 106.08,893.11 106.65,893.59 107.23,893.36 107.80,893.28 108.38,890.29 108.95,893.93 109.53,891.71 110.10,890.77 110.68,891.25 111.25,890.87 111.83,890.21 112.40,891.55 112.98,891.71 113.55,891.23 114.13,891.60 114.70,891.16 115.28,890.48 115.85,890.61 116.43,891.84 117.00,889.57 117.58,890.57 118.15,892.25 118.73,891.41 119.30,891.87 119.88,891.12 120.45,889.78 121.03,890.68 121.60,891.28 122.18,888.07 122.75,891.17 123.33,892.85 123.90,886.72 124.48,892.60 125.05,891.26 125.63,892.43 126.20,892.63 126.78,893.38 127.35,886.47 127.93,893.85 128.50,890.06 129.08,892.51 129.65,891.45 130.23,889.38 130.80,891.73 131.38,891.06 131.95,890.25 132.53,891.07 133.10,889.17 133.68,891.10 134.25,889.89 134.83,889.83 135.40,891.27 135.98,891.43 136.55,893.47 137.13,892.01 137.70,890.85 138.28,890.26 138.85,890.71 139.43,890.44 140.00,890.77 140.58,889.94 141.15,886.74 141.73,892.47 142.30,889.34 142.88,892.22 143.45,890.87 144.02,890.86 144.60,891.51 145.17,889.51 145.75,889.97 146.32,889.24 146.90,890.82 147.47,892.99 148.05,890.26 148.62,891.32 149.20,891.16 149.77,890.96 150.35,890.53 150.92,892.35 151.50,890.87 152.07,890.19 152.65,888.61 153.22,892.10 153.80,891.73 154.37,891.17 154.95,890.66 155.52,892.81 156.10,890.85 156.67,890.13 157.25,891.57 157.82,890.51 158.40,890.86 158.97,890.46 159.55,890.68 160.12,888.97 160.70,889.90 161.27,890.01 161.85,889.26 162.42,890.59 163.00,891.22 163.57,889.74 164.15,893.51 164.72,890.74 165.30,891.39 165.87,889.61 166.45,889.87 167.02,892.90 167.60,891.69 168.17,890.75 168.75,889.31 169.32,892.85 169.90,889.82 170.47,890.37 171.05,890.74 171.62,891.37 172.20,890.95 172.77,890.89 173.35,893.33 173.92,891.06 174.50,891.47 175.07,889.23 175.65,891.87 176.22,888.85 176.80,890.13 177.37,893.80 177.95,890.00 178.52,890.90 179.10,889.53 179.67,889.53 180.25,892.29 180.82,890.37 181.40,890.79 181.97,890.53 182.55,889.15 183.12,890.71 183.70,892.20 184.27,889.96 184.85,891.43 185.42,892.22 186.00,889.41 186.57,891.93 187.15,888.54 187.72,891.66 188.30,890.43 188.87,889.49 189.45,890.68 190.02,890.08 190.60,888.80 191.17,892.11 191.75,892.21 192.32,885.03 192.90,890.80 193.47,889.82 194.05,889.57 194.62,890.78 195.20,888.93 195.77,890.02 196.35,891.89 196.92,892.69 197.50,891.29 198.07,889.86 198.65,890.60 199.22,890.73 199.80,890.65 200.37,891.97 200.95,890.72 201.52,891.57 202.10,884.24 202.67,892.13 203.25,889.38 203.82,889.32 204.40,889.71 204.97,891.44 205.55,891.24 206.12,888.67 206.70,888.39 207.27,890.28 207.85,890.63 208.42,890.72 209.00,889.35 209.57,889.38 210.15,891.57 210.72,889.42 211.30,890.17 211.87,887.08 212.45,889.25 213.02,889.24 213.60,888.69 214.17,892.30 214.75,890.05 215.32,888.18 215.90,890.50 216.47,890.41 217.05,890.43 217.62,892.12 218.20,890.33 218.77,890.40 219.35,889.54 219.92,889.16 220.50,890.32 221.07,890.20 221.65,889.23 222.22,889.71 222.80,890.37 223.37,890.44 223.95,889.57 224.52,887.73 225.10,890.49 225.67,889.75 226.25,885.71 226.82,890.34 227.40,890.50 227.97,890.71 228.55,889.60 229.12,888.04 229.70,890.40 230.27,890.55 230.85,889.72 231.42,890.55 232.00,888.09 232.57,891.41 233.15,890.21 233.72,884.82 234.30,890.32 234.87,888.20 235.45,891.38 236.02,890.09 236.60,891.71 237.17,889.38 237.75,888.78 238.32,890.10 238.90,890.82 239.47,889.46 240.05,890.23 240.62,889.95 241.20,889.87 241.77,887.32 242.35,889.25 242.92,887.15 243.50,888.47 244.07,886.35 244.65,890.23 245.22,888.30 245.80,889.94 246.37,883.80 246.95,890.99 247.52,889.19 248.10,889.71 248.67,888.61 249.25,891.03 249.82,888.45 250.40,890.12 250.97,890.20 251.55,881.22 252.12,889.51 252.70,886.98 253.27,887.22 253.85,889.26 254.42,888.50 255.00,889.09 255.57,889.09 256.15,886.56 256.72,886.67 257.30,887.79 257.87,887.47 258.45,888.43 259.02,886.65 259.60,889.91 260.17,887.11 260.75,888.86 261.32,885.63 261.90,887.33 262.47,884.62 263.05,883.16 263.62,886.77 264.20,886.00 264.77,885.22 265.35,884.97 265.92,886.13 266.50,885.64 267.07,886.88 267.65,884.62 268.22,889.01 268.80,885.62 269.37,888.26 269.95,885.15 270.52,886.15 271.10,884.81 271.67,887.50 272.25,886.13 272.82,884.28 273.40,880.85 273.97,884.57 274.55,885.36 275.12,884.38 275.70,884.27 276.27,886.12 276.85,885.88 277.42,884.42 278.00,883.17 278.57,877.13 279.15,884.51 279.72,884.35 280.30,883.48 280.87,883.10 281.45,881.57 282.02,885.89 282.60,885.14 283.17,882.55 283.75,883.24 284.32,882.86 284.90,882.59 285.47,881.70 286.05,885.83 286.62,882.61 287.20,883.73 287.77,882.53 288.35,883.07 288.92,884.62 289.50,882.74 290.07,884.46 290.65,881.72 291.22,883.37 291.80,884.26 292.37,883.44 292.95,881.67 293.52,881.35 294.10,882.04 294.67,881.69 295.25,882.89 295.82,882.25 296.40,881.55 296.97,880.98 297.55,881.69 298.12,882.44 298.70,883.37 299.27,882.95 299.85,883.29 300.42,884.05 301.00,882.99 301.57,880.68 302.15,882.18 302.72,880.80 303.30,882.63 303.87,880.36 304.45,882.39 305.02,878.30 305.60,881.59 306.17,883.72 306.75,881.24 307.32,881.45 307.90,881.06 308.47,882.46 309.05,881.30 309.62,879.87 310.20,877.14 310.77,880.28 311.35,883.50 311.92,877.43 312.50,881.78 313.07,881.50 313.65,882.78 314.22,881.90 314.80,878.15 315.37,883.46 315.95,882.39 316.52,880.53 317.10,882.15 317.67,882.64 318.25,882.90 318.82,881.12 319.40,885.12 319.97,882.82 320.55,884.73 321.12,882.36 321.70,883.43 322.27,882.88 322.85,882.65 323.42,881.07 324.00,883.60 324.57,882.20 325.15,874.83 325.72,883.92 326.30,885.03 326.87,883.43 327.45,882.63 328.02,880.85 328.60,882.44 329.17,882.73 329.75,882.85 330.32,882.54 330.90,881.85 331.47,883.63 332.05,882.69 332.62,883.80 333.20,881.62 333.77,882.89 334.35,883.99 334.92,883.99 335.50,881.12 336.07,882.38 336.65,882.05 337.22,883.99 337.80,883.01 338.37,881.69 338.95,877.53 339.52,882.58 340.10,881.79 340.67,883.89 341.25,883.61 341.82,883.24 342.40,881.47 342.97,882.10 343.55,884.63 344.12,881.29 344.70,883.49 345.27,882.41 345.85,883.32 346.42,883.78 347.00,883.29 347.57,883.70 348.15,881.39 348.72,881.36 349.30,880.54 349.87,883.12 350.45,882.33 351.02,882.54 351.60,883.25 352.17,878.44 352.75,882.69 353.32,883.91 353.90,883.25 354.47,883.17 355.05,882.25 355.62,883.30 356.20,884.10 356.77,882.49 357.35,883.11 357.92,882.75 358.50,882.90 359.07,883.73 359.65,879.22 360.22,881.63 360.80,882.17 361.37,882.37 361.95,882.34 362.52,882.03 363.10,883.42 363.67,884.61 364.25,884.21 364.82,882.83 365.40,883.80 365.97,884.12 366.55,881.76 367.12,885.40 367.70,883.36 368.27,882.67 368.85,887.49 369.42,883.09 370.00,883.99 370.57,883.50 371.15,885.65 371.72,884.11 372.30,882.66 372.87,876.86 373.45,885.24 374.02,886.13 374.60,885.77 375.17,883.77 375.75,884.58 376.32,886.58 376.90,883.37 377.47,884.49 378.05,885.13 378.62,886.23 379.20,884.83 379.77,885.01 380.35,883.72 380.92,885.86 381.50,884.04 382.07,887.79 382.65,885.29 383.22,885.91 383.80,884.68 384.37,884.69 384.95,885.90 385.52,884.43 386.10,884.94 386.67,884.78 387.25,885.48 387.82,885.48 388.40,884.89 388.97,886.01 389.55,886.75 390.12,884.15 390.70,884.25 391.27,884.21 391.85,884.14 392.42,884.22 393.00,885.09 393.57,885.97 394.15,884.22 394.72,885.58 395.30,884.55 395.87,888.27 396.45,885.39 397.02,886.00 397.60,883.92 398.17,884.07 398.75,885.39 399.32,884.22 399.90,885.09 400.47,886.62 401.05,884.30 401.62,884.18 402.20,885.41 402.77,884.90 403.35,886.01 403.92,885.09 404.50,883.98 405.07,882.69 405.65,885.72 406.22,884.45 406.80,885.47 407.37,883.14 407.95,884.44 408.52,885.81 409.10,886.66 409.67,886.71 410.25,886.99 410.82,885.40 411.40,886.63 411.97,885.88 412.55,885.17 413.12,884.93 413.70,884.55 414.27,886.79 414.85,885.60 415.42,884.67 416.00,885.42 416.57,887.93 417.15,883.89 417.72,880.38 418.30,886.07 418.87,886.62 419.45,885.37 420.02,885.41 420.60,886.65 421.17,887.38 421.75,887.58 422.32,877.99 422.90,885.42 423.47,885.47 424.05,887.74 424.62,886.22 425.20,887.29 425.77,882.90 426.35,885.41 426.92,886.24 427.50,885.40 428.07,888.56 428.65,884.49 429.22,886.58 429.80,887.04 430.37,884.91 430.95,887.04 431.52,886.50 432.10,889.63 432.67,887.84 433.25,885.96 433.82,887.24 434.40,886.55 434.97,885.47 435.55,886.88 436.12,886.68 436.70,888.06 437.27,884.32 437.85,884.38 438.42,885.13 439.00,886.92 439.57,887.45 440.15,885.95 440.72,886.42 441.30,886.17 441.87,884.09 442.45,885.08 443.02,887.27 443.60,887.19 444.17,887.61 444.75,882.27 445.32,885.29 445.90,888.18 446.47,886.57 447.05,888.04 447.62,886.29 448.20,884.23 448.77,889.63 449.35,887.84 449.92,885.03 450.50,884.72 451.07,886.61 451.65,886.79 452.22,885.32 452.80,886.35 453.37,884.64 453.95,885.66 454.52,884.60 455.10,886.51 455.67,888.79 456.25,885.44 456.82,880.38 457.40,885.87 457.97,884.65 458.55,886.67 459.12,885.06 459.70,887.02 460.27,887.08 460.85,884.07 461.42,886.82 462.00,883.63 462.57,887.25 463.15,883.57 463.72,884.90 464.30,887.86 464.87,886.50 465.45,887.10 466.02,883.17 466.60,887.21 467.17,885.18 467.75,888.31 468.32,886.30 468.90,886.11 469.47,884.21 470.05,885.10 470.62,886.20 471.20,887.96 471.77,887.86 472.35,885.93 472.92,884.80 473.50,884.70 474.07,888.40 474.65,886.64 475.22,884.93 475.80,888.19 476.37,886.98 476.95,887.26 477.52,887.38 478.10,886.73 478.67,885.66 479.25,884.24 479.82,878.90 480.40,886.53 480.97,884.63 481.55,885.24 482.12,888.55 482.70,885.99 483.27,884.54 483.85,885.62 484.42,889.77 485.00,885.17 485.57,886.20 486.15,884.62 486.72,887.07 487.30,888.00 487.87,889.45 488.45,886.84 489.02,884.97 489.60,885.36 490.17,886.48 490.75,882.29 491.32,887.52 491.90,885.87 492.47,886.96 493.05,887.91 493.62,884.57 494.20,885.58 494.77,888.55 495.35,885.42 495.92,886.16 496.50,886.21 497.07,885.20 497.65,887.37 498.22,887.75 498.80,886.46 499.37,890.16 499.95,888.27 500.52,887.34 501.10,888.43 501.67,887.37 502.25,886.01 502.82,886.71 503.40,887.50 503.97,889.48 504.55,881.40 505.12,887.70 505.70,884.87 506.27,890.79 506.85,888.36 507.42,886.97 508.00,885.63 508.57,889.06 509.15,886.68 509.72,886.67 510.30,886.12 510.87,885.71 511.45,887.22 512.02,887.38 512.60,886.86 513.17,886.03 513.75,885.82 514.32,887.96 514.90,887.50 515.47,888.83 516.05,887.72 516.62,886.96 517.20,887.75 517.77,887.17 518.35,888.65 518.92,887.00 519.50,885.75 520.07,888.97 520.65,888.47 521.22,888.86 521.80,890.80 522.37,887.65 522.95,888.67 523.52,888.28 524.10,885.70 524.67,887.90 525.25,886.19 525.82,888.29 526.40,883.55 526.97,888.12 527.55,887.56 528.12,889.86 528.70,888.14 529.27,889.90 529.85,887.52 530.42,887.22 531.00,887.57 531.57,887.54 532.15,889.22 532.72,888.91 533.30,889.18 533.87,888.71 534.45,889.17 535.02,887.80 535.60,890.29 536.17,889.13 536.75,887.86 537.32,891.65 537.90,888.28 538.47,888.76 539.05,889.22 539.62,889.26 540.20,889.35 540.77,883.50 541.35,888.72 541.92,885.77 542.50,888.73 543.07,889.57 543.65,887.91 544.22,889.27 544.80,888.38 545.37,889.03 545.95,887.80 546.52,890.18 547.10,890.12 547.67,886.99 548.25,888.65 548.82,888.53 549.40,886.51 549.97,887.42 550.55,888.69 551.12,887.50 551.70,889.21 552.27,889.94 552.85,888.25 553.42,889.81 554.00,890.81 554.57,888.29 555.15,890.57 555.72,890.60 556.30,890.84 556.87,889.18 557.45,889.52 558.02,888.17 558.60,890.30 559.17,890.15 559.75,889.70 560.32,889.23 560.90,883.66 561.47,890.21 562.05,890.47 562.62,890.25 563.20,890.40 563.77,888.63 564.35,888.37 564.92,889.07 565.50,890.91 566.07,888.54 566.65,890.90 567.22,890.46 567.80,884.32 568.37,887.67 568.95,888.61 569.52,889.55 570.10,890.46 570.67,890.07 571.25,889.93 571.82,888.86 572.40,890.75 572.97,888.10 573.55,888.54 574.12,889.62 574.70,890.38 575.27,890.00 575.85,890.06 576.42,888.81 577.00,890.66 577.57,886.80 578.15,888.59 578.72,887.75 579.30,888.05 579.87,889.96 580.45,890.44 581.02,888.17 581.60,889.40 582.17,891.80 582.75,889.80 583.32,891.25 583.90,890.74 584.47,890.87 585.05,889.01 585.62,889.85 586.20,892.25 586.77,888.41 587.35,887.94 587.92,884.17 588.50,889.62 589.07,888.16 589.65,886.82 590.22,882.65 590.80,887.80 591.37,889.10 591.95,887.60 592.52,889.74 593.10,889.35 593.67,890.54 594.25,888.86 594.82,890.49 595.40,890.60 595.97,890.67 596.55,890.05 597.12,889.63 597.70,889.39 598.27,888.45 598.85,888.93 599.42,888.93 600.00,891.56 600.57,887.40 601.15,888.58 601.72,889.21 602.30,887.67 602.87,889.74 603.45,888.01 604.02,889.23 604.60,888.80 605.18,885.90 605.75,889.45 606.33,887.08 606.90,889.06 607.48,890.47 608.05,889.69 608.63,888.57 609.20,888.63 609.78,888.76 610.35,888.23 610.93,887.44 611.50,888.46 612.08,888.36 612.65,890.99 613.23,889.02 613.80,891.17 614.38,888.30 614.95,888.77 615.53,888.34 616.10,887.24 616.68,887.07 617.25,887.89 617.83,889.43 618.40,886.87 618.98,886.49 619.55,888.09 620.13,887.34 620.70,887.24 621.28,890.05 621.85,887.99 622.43,888.74 623.00,887.92 623.58,888.96 624.15,884.02 624.73,886.11 625.30,888.39 625.88,889.25 626.45,886.63 627.03,889.91 627.60,887.04 628.18,887.15 628.75,885.95 629.33,886.31 629.90,889.04 630.48,887.78 631.05,888.87 631.63,887.89 632.20,890.00 632.78,886.42 633.35,888.67 633.93,890.04 634.50,887.06 635.08,886.11 635.65,887.88 636.23,887.79 636.80,886.81 637.38,886.05 637.95,887.14 638.53,887.36 639.10,888.53 639.68,886.89 640.25,886.50 640.83,879.40 641.40,884.14 641.98,889.03 642.55,887.65 643.13,886.02 643.70,889.43 644.28,888.81 644.85,886.97 645.43,887.70 646.00,888.30 646.58,885.65 647.15,887.48 647.73,884.03 648.30,887.14 648.88,889.54 649.45,885.91 650.03,885.50 650.60,887.23 651.18,886.13 651.75,887.71 652.33,887.24 652.90,888.35 653.48,888.79 654.05,886.09 654.63,880.07 655.20,885.46 655.78,885.78 656.35,884.68 656.93,883.94 657.50,886.06 658.08,884.70 658.65,888.23 659.23,887.76 659.80,885.28 660.38,886.95 660.95,884.40 661.53,883.90 662.10,884.68 662.68,883.74 663.25,886.22 663.83,884.20 664.40,884.86 664.98,887.32 665.55,884.81 666.13,886.70 666.70,885.92 667.28,884.14 667.85,884.44 668.43,882.98 669.00,885.71 669.58,885.54 670.15,883.85 670.73,883.57 671.30,884.67 671.88,884.86 672.45,882.50 673.03,883.68 673.60,884.21 674.18,882.61 674.75,883.87 675.33,882.92 675.90,884.07 676.48,881.95 677.05,882.14 677.63,883.12 678.20,880.94 678.78,880.86 679.35,883.32 679.93,880.54 680.50,880.98 681.08,882.83 681.65,881.82 682.23,881.77 682.80,882.80 683.38,881.80 683.95,882.80 684.53,881.98 685.10,879.84 685.68,873.85 686.25,880.44 686.83,881.41 687.40,879.12 687.98,878.23 688.55,878.32 689.13,878.55 689.70,878.21 690.28,878.50 690.85,878.83 691.43,875.76 692.00,875.42 692.58,876.30 693.15,870.43 693.73,875.85 694.30,875.41 694.88,874.85 695.45,874.11 696.03,876.13 696.60,874.01 697.18,875.27 697.75,874.31 698.33,873.49 698.90,871.67 699.48,874.17 700.05,873.64 700.63,873.35 701.20,873.73 701.78,874.41 702.35,873.50 702.93,864.74 703.50,870.97 704.08,870.43 704.65,868.77 705.23,871.00 705.80,869.72 706.38,868.84 706.95,869.07 707.53,872.44 708.10,868.64 708.68,870.58 709.25,870.78 709.83,868.75 710.40,869.29 710.98,866.72 711.55,867.24 712.13,863.99 712.70,865.01 713.28,868.45 713.85,867.06 714.43,865.19 715.00,865.74 715.58,863.67 716.15,863.99 716.73,857.68 717.30,863.25 717.88,862.82 718.45,861.21 719.03,862.34 719.60,862.37 720.18,859.61 720.75,859.65 721.33,858.16 721.90,858.33 722.48,859.05 723.05,856.08 723.63,855.18 724.20,855.09 724.78,850.46 725.35,854.08 725.93,852.45 726.50,851.77 727.08,851.70 727.65,851.10 728.23,850.36 728.80,849.03 729.38,847.81 729.95,846.57 730.53,846.88 731.10,845.83 731.68,845.16 732.25,845.60 732.83,843.05 733.40,845.10 733.98,842.00 734.55,842.90 735.13,840.34 735.70,840.50 736.28,839.02 736.85,836.79 737.43,838.01 738.00,835.25 738.58,835.34 739.15,835.86 739.73,837.19 740.30,832.07 740.88,827.59 741.45,830.45 742.03,830.29 742.60,828.68 743.18,829.01 743.75,825.54 744.33,826.82 744.90,824.55 745.48,822.60 746.05,821.21 746.63,820.17 747.20,819.07 747.78,816.91 748.35,815.44 748.93,814.16 749.50,812.65 750.08,812.12 750.65,810.50 751.23,807.38 751.80,806.68 752.38,804.69 752.95,803.81 753.53,802.11 754.10,800.29 754.68,799.59 755.25,797.54 755.83,795.49 756.40,793.31 756.98,792.42 757.55,790.74 758.13,788.48 758.70,786.26 759.28,785.28 759.85,784.72 760.43,780.81 761.00,779.28 761.58,777.30 762.15,773.21 762.73,773.03 763.30,770.37 763.88,769.72 764.45,766.45 765.03,763.93 765.60,762.15 766.18,760.22 766.75,757.50 767.33,755.62 767.90,752.46 768.48,750.98 769.05,749.40 769.63,747.93 770.20,744.73 770.78,742.10 771.35,740.38 771.93,737.84 772.50,735.81 773.08,732.86 773.65,729.43 774.23,727.05 774.80,724.32 775.38,721.68 775.95,718.86 776.53,715.38 777.10,711.64 777.68,709.81 778.25,706.01 778.83,704.61 779.40,701.69 779.98,698.55 780.55,696.02 781.13,693.16 781.70,690.17 782.28,687.55 782.85,684.73 783.43,681.44 784.00,678.97 784.58,676.11 785.15,673.36 785.73,670.71 786.30,667.75 786.88,665.08 787.45,662.35 788.03,659.68 788.60,657.09 789.18,654.18 789.75,651.53 790.33,649.03 790.90,646.17 791.48,643.45 792.05,640.27 792.63,637.57 793.20,634.68 793.78,631.80 794.35,628.67 794.93,625.81 795.50,622.49 796.08,619.27 796.65,615.95 797.23,612.63 797.80,608.92 798.38,605.54 798.95,601.74 799.53,597.90 800.10,594.03 800.68,590.17 801.25,586.26 801.83,582.21 802.40,578.04 802.98,574.00 803.55,569.73 804.13,565.73 804.70,561.34 805.28,556.83 805.85,553.13 806.43,548.68 807.00,544.18 807.58,539.95 808.15,535.44 808.73,531.42 809.30,526.67 809.88,521.81 810.45,517.54 811.03,512.76 811.60,508.44 812.18,503.29 812.75,498.36 813.33,493.94 813.90,489.05 814.48,484.15 815.05,478.94 815.63,474.32 816.20,469.45 816.78,463.82 817.35,459.14 817.93,453.72 818.50,448.97 819.08,443.48 819.65,438.18 820.23,433.15 820.80,427.85 821.38,422.47 821.95,417.45 822.53,412.03 823.10,406.58 823.68,401.87 824.25,396.19 824.83,390.78 825.40,385.49 825.98,379.72 826.55,374.20 827.13,368.69 827.70,362.98 828.28,357.28 828.85,351.58 829.43,345.42 830.00,339.58 830.58,333.56 831.15,327.22 831.73,321.28 832.30,314.93 832.88,309.02 833.45,302.65 834.03,296.20 834.60,289.53 835.18,283.22 835.75,276.51 836.33,270.14 836.90,263.43 837.48,256.76 838.05,250.50 838.63,244.01 839.20,237.49 839.78,231.53 840.35,225.12 840.93,218.92 841.50,212.70 842.08,206.15 842.65,199.58 843.23,192.75 843.80,185.83 844.38,178.42 844.95,170.59 845.53,163.21 846.10,155.29 846.68,147.75 847.25,140.18 847.83,132.39 849.40,129.40 853.50,130.50 854.50,131.50 863.50,131.50 864.50,132.50 1023.20,132.50 1024.00,148.07 1024.58,163.46 1025.15,181.66 1025.73,203.23 1026.30,233.09 1026.88,267.19 1027.45,297.15 1028.03,318.28 1028.60,333.06 1029.18,346.21 1029.75,361.20 1030.33,382.37 1030.90,410.26 1031.48,434.76 1032.05,453.26 1032.63,469.89 1033.20,484.83 1033.78,497.90 1034.35,509.20 1034.93,519.79 1035.50,529.41 1036.08,538.97 1036.65,549.35 1037.23,560.55 1037.80,573.06 1038.38,586.46 1038.95,600.02 1039.53,611.61 1040.10,622.36 1040.68,632.38 1041.25,641.94 1041.83,650.74 1042.40,659.38 1042.98,667.30 1043.55,674.52 1044.13,680.61 1044.70,686.39 1045.28,692.31 1045.85,697.65 1046.43,702.83 1047.00,707.00 1047.58,712.34 1048.15,716.55 1048.73,721.27 1049.30,723.84 1049.88,728.64 1050.45,732.12 1051.03,734.98 1051.60,739.28 1052.18,742.40 1052.75,745.26 1053.33,748.92 1053.90,750.69 1054.48,754.61 1055.05,757.84 1055.63,760.55 1056.20,763.83 1056.78,764.87 1057.35,767.20 1057.93,770.87 1058.50,773.37 1059.08,776.78 1059.65,777.86 1060.23,778.84 1060.80,781.92 1061.38,782.55 1061.95,783.75 1062.53,788.15 1063.10,787.97 1063.68,789.58 1064.25,790.73 1064.83,792.80 1065.40,792.86 1065.98,794.59 1066.55,794.05 1067.13,794.79 1067.70,797.73 1068.28,798.72 1068.85,798.98 1069.43,799.72 1070.00,800.62 1070.58,802.51 1071.15,802.69 1071.73,803.96 1072.30,804.61 1072.88,805.29 1073.45,805.39 1074.03,807.19 1074.60,807.81 1075.18,808.52 1075.75,808.37 1076.33,809.53 1076.90,812.72 1077.48,811.80 1078.05,811.61 1078.63,812.46 1079.20,813.13 1079.78,813.65 1080.35,814.15 1080.93,815.89 1081.50,817.32 1082.08,817.78 1082.65,819.63 1083.23,818.59 1083.80,819.71 1084.38,819.19 1084.95,820.89 1085.53,822.61 1086.10,822.46 1086.68,821.74 1087.25,822.19 1087.83,823.29 1088.40,823.29 1088.98,823.76 1089.55,825.98 1090.13,824.84 1090.70,825.98 1091.28,827.96 1091.85,825.90 1092.43,829.28 1093.00,827.92 1093.58,828.05 1094.15,829.81 1094.73,830.11 1095.30,830.86 1095.88,833.39 1096.45,832.32 1097.03,830.90 1097.60,832.68 1098.18,834.18 1098.75,834.50 1099.33,833.49 1099.90,834.55 1100.48,834.85 1101.05,834.60 1101.63,836.43 1102.20,836.21 1102.78,837.17 1103.35,837.93 1103.93,837.50 1104.50,840.40 1105.08,838.19 1105.65,839.74 1106.23,839.74 1106.80,840.50 1107.38,842.40 1107.95,840.02 1108.53,842.53 1109.10,840.81 1109.68,843.09 1110.25,841.42 1110.83,842.99 1111.40,842.88 1111.98,843.58 1112.55,845.59 1113.13,846.14 1113.70,845.30 1114.28,844.99 1114.85,847.19 1115.43,845.22 1116.00,845.28 1116.58,847.26 1117.15,847.66 1117.73,848.43 1118.30,848.59 1118.88,852.27 1119.45,848.46 1120.03,849.34 1120.60,849.39 1121.18,851.72 1121.75,850.11 1122.33,850.05 1122.90,851.60 1123.48,851.50 1124.05,852.96 1124.63,850.63 1125.20,854.32 1125.78,854.07 1126.35,853.73 1126.93,853.81 1127.50,855.40 1128.08,854.99 1128.65,856.15 1129.23,858.21 1129.80,856.55 1130.38,858.15 1130.95,857.95 1131.53,856.93 1132.10,859.55 1132.68,859.29 1133.25,857.68 1133.83,859.57 1134.40,861.76 1134.98,861.25 1135.55,861.40 1136.13,857.08 1136.70,861.43 1137.28,860.83 1137.85,862.96 1138.43,861.42 1139.00,858.87 1139.58,863.99 1140.15,867.02 1140.73,865.76 1141.30,865.39 1141.88,868.58 1142.45,865.30 1143.03,866.28 1143.60,865.10 1144.18,864.25 1144.75,866.37 1145.33,868.10 1145.90,864.67 1146.48,866.03 1147.05,867.54 1147.63,869.10 1148.20,869.45 1148.78,869.58 1149.35,867.99 1149.93,869.82 1150.50,872.29 1151.08,865.38 1151.65,869.90 1152.23,871.57 1152.80,869.58 1153.38,871.28 1153.95,872.81 1154.53,871.05 1155.10,868.99 1155.68,870.34 1156.25,871.28 1156.83,872.52 1157.40,870.55 1157.98,871.12 1158.55,873.98 1159.13,876.61 1159.70,874.86 1160.28,874.03 1160.85,876.12 1161.43,876.33 1162.00,876.46 1162.58,873.65 1163.15,878.21 1163.73,873.93 1164.30,875.67 1164.88,873.23 1165.45,877.07 1166.03,876.59 1166.60,878.03 1167.18,877.02 1167.75,875.96 1168.33,877.75 1168.90,876.13 1169.48,881.23 1170.05,876.28 1170.63,879.71 1171.20,877.54 1171.78,878.24 1172.35,878.71 1172.93,880.79 1173.50,879.98 1174.08,880.35 1174.65,878.49 1175.23,881.76 1175.80,880.47 1176.38,880.42 1176.95,883.27 1177.53,882.76 1178.10,881.77 1178.68,882.96 1179.25,880.49 1179.83,882.09 1180.40,882.78 1180.98,879.01 1181.55,882.03 1182.13,882.96 1182.70,885.55 1183.28,881.62 1183.85,882.70 1184.43,883.92 1185.00,884.37 1185.58,884.38 1186.15,881.38 1186.73,885.31 1187.30,882.97 1187.88,884.56 1188.45,886.01 1189.03,886.11 1189.60,887.28 1190.18,886.02 1190.75,887.89 1191.33,884.78 1191.90,886.83 1192.48,886.03 1193.05,886.38 1193.63,888.32 1194.20,890.02 1194.78,891.77 1195.35,888.18 1195.93,883.71 1196.50,888.10 1197.08,886.10 1197.65,887.86 1198.23,884.84 1198.80,888.09 1199.38,888.88 1199.95,890.25 1200.53,889.94 1201.10,890.81 1201.68,887.54 1202.25,891.50 1202.83,889.92 1203.40,889.98 1203.98,889.63 1204.55,893.29 1205.13,889.57 1205.70,889.55 1206.28,891.78 1206.85,890.93 1207.43,889.45 1208.00,891.66 1208.58,890.22 1209.15,892.65 1209.73,889.59 1210.30,891.80 1210.88,891.65 1211.45,893.28 1212.03,892.04 1212.60,892.88 1213.18,892.30 1213.75,891.86 1214.33,891.01 1214.90,893.14 1215.48,892.68 1216.05,894.55 1216.63,888.54 1217.20,891.49 1217.78,894.39 1218.35,895.80 1218.93,892.84 1219.50,892.21 1220.08,893.31 1220.65,894.21 1221.23,893.13 1221.80,893.39 1222.38,894.92 1222.95,896.00 1223.53,889.99 1224.10,894.73 1224.68,892.89 1225.25,897.63 1225.83,893.67 1226.40,892.08 1226.98,894.26 1227.55,896.83 1228.13,893.08 1228.70,895.27 1229.28,890.70 1229.85,895.41 1230.43,896.38 1231.00,895.35 1231.58,897.24 1232.15,894.74 1232.73,894.46 1233.30,895.18 1233.88,892.23 1234.45,893.08 1235.03,895.49 1235.60,897.12 1236.18,893.70 1236.75,895.48 1237.33,897.21 1237.90,893.98 1238.48,894.47 1239.05,893.32 1239.63,896.79 1240.20,896.61 1240.78,894.00 1241.35,897.74 1241.93,895.55 1242.50,895.82 1243.08,897.02 1243.65,897.54 1244.23,895.19 1244.80,896.94 1245.38,896.54 1245.95,898.74 1246.53,895.79 1247.10,898.87 1247.68,894.52 1248.25,897.89" fill="none" stroke="#dd0000" stroke-width="1" stroke-linejoin="round" shape-rendering="crispEdges"/>
</svg>
<div id="status" class="abs">
<div class="abs" style="left:0;top:0;width:1280px;height:1px;background:#f2f0e4;"></div>
<div class="abs" style="left:0;top:1px;width:1280px;height:1px;background:#fffff6;"></div>
<div class="abs" style="left:0;top:4px;width:210px;height:16px;border-top:1px solid #a8a596;border-left:1px solid #a8a596;border-right:1px solid #fffff6;border-bottom:1px solid #fffff6;box-sizing:border-box;"></div>
<span class="abs" style="left:2px;top:6px;font-size:11px;">Monitor</span>
<div class="abs" style="left:212px;top:4px;width:252px;height:16px;border-top:1px solid #a8a596;border-left:1px solid #a8a596;border-right:1px solid #fffff6;border-bottom:1px solid #fffff6;box-sizing:border-box;"></div>
</div>
</body></html>
